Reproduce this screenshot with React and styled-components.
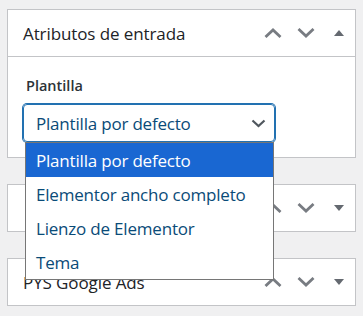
import React from "react";
import styled, { createGlobalStyle } from "styled-components";

const GlobalStyle = createGlobalStyle`
  html, body { margin: 0; padding: 0; }
  body {
    background: #f0f0f1;
    font-family: "Open Sans", "Noto Sans", sans-serif;
    color: #1d2327;
  }
`;

const Page = styled.div`
  padding: 9px 7px 0 7px;
  display: flex;
  flex-direction: column;
  gap: 26px;
`;

const Postbox = styled.section`
  background: #fff;
  border: 1px solid #c3c4c7;
`;

const Header = styled.div`
  display: flex;
  align-items: center;
  height: 46px;
  border-bottom: ${(p) => (p.$open ? "1px solid #c3c4c7" : "none")};
`;

const Title = styled.h2`
  flex: 1;
  margin: 0;
  padding-left: 15px;
  font-size: 17px;
  letter-spacing: -0.1px;
  font-weight: 400;
  color: #1d2327;
  white-space: nowrap;
  overflow: hidden;
`;

const Actions = styled.div`
  display: flex;
  align-items: center;
  height: 100%;
`;

const HandleButton = styled.button`
  width: 33px;
  height: 46px;
  padding: 0;
  border: 0;
  background: none;
  display: flex;
  align-items: center;
  justify-content: center;
  color: ${(p) => p.$color || "#787c82"};
`;

const Inside = styled.div`
  padding: 19px 15px 15px 15px;
`;

const Label = styled.p`
  margin: 0 0 8px 3px;
  font-size: 14.5px;
  line-height: 20px;
  font-weight: 600;
  color: #2c3338;
`;

const SelectWrap = styled.div`
  position: relative;
  width: 252px;
`;

const SelectBox = styled.div`
  box-sizing: border-box;
  height: 38px;
  border: 1px solid #2271b1;
  box-shadow: 0 0 0 1px #2271b1;
  border-radius: 4px;
  display: flex;
  align-items: center;
  justify-content: space-between;
  padding: 0 8px 0 12px;
  font-size: 17px;
  letter-spacing: -0.2px;
  color: #0a4b78;
`;

const Dropdown = styled.ul`
  position: absolute;
  left: 2px;
  top: 38px;
  width: 249px;
  box-sizing: border-box;
  margin: 0;
  padding: 0;
  list-style: none;
  background: #fff;
  border: 1px solid #767676;
  z-index: 10;
`;

const Option = styled.li`
  height: 34px;
  display: flex;
  align-items: center;
  padding-left: 10px;
  font-size: 17px;
  letter-spacing: -0.2px;
  background: ${(p) => (p.$active ? "#1967d2" : "#fff")};
  color: ${(p) => (p.$active ? "#fff" : "#0a4b78")};
`;

const Chevron = ({ up }) => (
  <svg width="18" height="10" viewBox="0 0 18 10">
    <polyline
      points={up ? "1.5,9 9,2 16.5,9" : "1.5,1 9,8 16.5,1"}
      fill="none"
      stroke="currentColor"
      strokeWidth="2.8"
    />
  </svg>
);

const Triangle = ({ up }) => (
  <svg width="10" height="6" viewBox="0 0 10 6">
    <polygon points={up ? "0,6 5,0 10,6" : "0,0 10,0 5,6"} fill="currentColor" />
  </svg>
);

const SelectChevron = () => (
  <svg width="15" height="9" viewBox="0 0 15 9">
    <polyline points="1.5,1.5 7.5,7 13.5,1.5" fill="none" stroke="#50575e" strokeWidth="2.2" />
  </svg>
);

const Handles = ({ open }) => (
  <Actions>
    <HandleButton aria-label="Subir">
      <Chevron up />
    </HandleButton>
    <HandleButton aria-label="Bajar">
      <Chevron />
    </HandleButton>
    <HandleButton aria-label="Alternar" $color="#646970">
      <Triangle up={open} />
    </HandleButton>
  </Actions>
);

const options = [
  "Plantilla por defecto",
  "Elementor ancho completo",
  "Lienzo de Elementor",
  "Tema",
];

export default function App() {
  return (
    <>
      <GlobalStyle />
      <Page>
        <Postbox>
          <Header $open>
            <Title>Atributos de entrada</Title>
            <Handles open />
          </Header>
          <Inside>
            <Label>Plantilla</Label>
            <SelectWrap>
              <SelectBox>
                <span>Plantilla por defecto</span>
                <SelectChevron />
              </SelectBox>
              <Dropdown>
                {options.map((o, i) => (
                  <Option key={o} $active={i === 0}>
                    {o}
                  </Option>
                ))}
              </Dropdown>
            </SelectWrap>
          </Inside>
        </Postbox>
        <Postbox>
          <Header>
            <Title />
            <Handles />
          </Header>
        </Postbox>
        <Postbox>
          <Header>
            <Title>PYS Google Ads</Title>
            <Handles />
          </Header>
        </Postbox>
      </Page>
    </>
  );
}
